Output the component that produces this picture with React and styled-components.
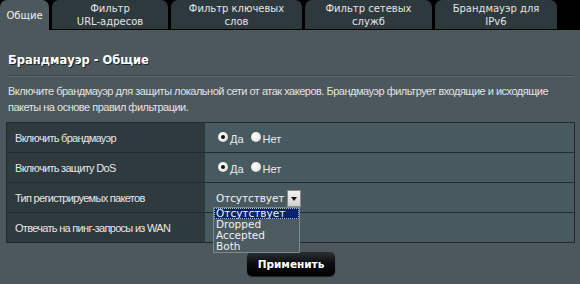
import React from "react";
import styled, { createGlobalStyle } from "styled-components";

const Global = createGlobalStyle`
  html, body { margin: 0; padding: 0; background: #000; }
  body { width: 580px; height: 284px; overflow: hidden; }
`;

const Page = styled.div`
  width: 580px;
  height: 284px;
  display: flex;
  flex-direction: column;
  background: #000;
  font-family: "DejaVu Sans", Verdana, sans-serif;
`;

const TabBar = styled.div`
  display: flex;
  align-items: flex-end;
  height: 30px;
  gap: 3px;
  background: #000;
`;

const Tab = styled.div`
  width: ${(p) => p.$w}px;
  height: ${(p) => (p.$active ? 30 : 29)}px;
  margin-bottom: ${(p) => (p.$active ? 0 : 1)}px;
  align-self: ${(p) => (p.$active ? "flex-end" : "flex-start")};
  border-radius: 7px 7px 0 0;
  background: ${(p) => (p.$active ? "#4d585c" : "#2e393d")};
  color: ${(p) => (p.$active ? "#f0f0f0" : "#e4e4e4")};
  font-size: 10px;
  line-height: 13px;
  text-align: center;
  display: flex;
  align-items: center;
  justify-content: center;
  flex-shrink: 0;
`;

const Panel = styled.div`
  flex: 1;
  background: #4d585c;
  padding: 22px 5px 0 6px;
  display: flex;
  flex-direction: column;
  position: relative;
`;

const Title = styled.div`
  color: #ffffff;
  font-weight: bold;
  font-size: 11.5px;
  line-height: 16px;
  padding-left: 2px;
  text-shadow: 1px 1px 0 #1e2628;
`;

const Rule = styled.div`
  margin: 7px 2px 0 2px;
  height: 1px;
  background: #3d474a;
  border-bottom: 1px solid #5d6a6e;
`;

const Desc = styled.div`
  margin-top: 6px;
  padding-left: 2px;
  color: #e2e2e2;
  font-family: "Liberation Sans", Arial, sans-serif;
  font-size: 11px;
  letter-spacing: -0.5px;
  line-height: 16px;
`;

const Table = styled.div`
  margin-top: 7px;
  border: 1px solid #20292c;
  display: flex;
  flex-direction: column;
`;

const Row = styled.div`
  display: grid;
  grid-template-columns: 198px 1fr;
  height: 29px;
  border-top: ${(p) => (p.$first ? "none" : "1px solid #232c2f")};
`;

const Label = styled.div`
  background: #2f3a3e;
  color: #e6e6e6;
  font-family: "Liberation Sans", Arial, sans-serif;
  font-size: 11px;
  letter-spacing: -0.7px;
  display: flex;
  align-items: center;
  padding-left: 8px;
`;

const Value = styled.div`
  background: #485a5f;
  display: flex;
  align-items: center;
  padding-left: 13px;
  position: relative;
`;

const RadioLabel = styled.span`
  display: inline-flex;
  align-items: center;
  color: #ececec;
  font-family: "Liberation Sans", Arial, sans-serif;
  font-size: 11px;
  margin-right: 7px;
`;

const RadioText = styled.span`
  margin-top: 3px;
`;

const Radio = styled.span`
  width: 10px;
  height: 10px;
  border-radius: 50%;
  background: radial-gradient(circle at 40% 40%, #ffffff 0%, #e8e8e8 60%, #b8b8b8 100%);
  box-sizing: border-box;
  margin-right: 2px;
  margin-top: -2px;
  display: inline-flex;
  align-items: center;
  justify-content: center;
  &::after {
    content: "";
    width: 4px;
    height: 4px;
    border-radius: 50%;
    background: ${(p) => (p.$checked ? "#111" : "transparent")};
  }
`;

const Select = styled.div`
  display: inline-flex;
  align-items: center;
  height: 17px;
  margin-left: -5px;
  margin-top: 2px;
`;

const SelectText = styled.span`
  color: #f2f2f2;
  font-size: 10.5px;
  letter-spacing: -0.1px;
  padding: 0 3px 0 3px;
  line-height: 17px;
`;

const SelectBtn = styled.span`
  width: 12px;
  height: 15px;
  background: linear-gradient(#f2f2f2, #cfcfcf);
  border: 1px solid #8a8a8a;
  display: inline-flex;
  align-items: center;
  justify-content: center;
  &::after {
    content: "";
    border-left: 3px solid transparent;
    border-right: 3px solid transparent;
    border-top: 4px solid #111;
  }
`;

const DropList = styled.div`
  position: absolute;
  left: 8px;
  top: 24px;
  width: 85px;
  background: #4b5b60;
  border: 1px solid #7a8a8e;
  z-index: 5;
  display: flex;
  flex-direction: column;
`;

const DropItem = styled.div`
  font-size: 10.5px;
  line-height: 11px;
  height: 11px;
  padding-left: 2px;
  color: #f0f0f0;
  background: ${(p) => (p.$sel ? "#0a246a" : "transparent")};
  outline: ${(p) => (p.$sel ? "1px dotted #b0b8d0" : "none")};
  outline-offset: -1px;
`;

const ButtonRow = styled.div`
  display: flex;
  justify-content: center;
  margin-top: 9px;
`;

const Button = styled.button`
  width: 88px;
  height: 24px;
  border: none;
  border-radius: 5px;
  background: linear-gradient(#2a2f31 0%, #0a0c0d 50%, #000 100%);
  color: #fff;
  font-family: "DejaVu Sans", Verdana, sans-serif;
  font-weight: bold;
  font-size: 10.5px;
  box-shadow: 0 1px 1px rgba(0, 0, 0, 0.6);
  padding: 0;
  margin-left: 1px;
`;

const tabs = [
  { w: 49, text: ["Общие"], active: true },
  { w: 116, text: ["Фильтр", "URL-адресов"] },
  { w: 131, text: ["Фильтр ключевых", "слов"] },
  { w: 127, text: ["Фильтр сетевых", "служб"] },
  { w: 122, text: ["Брандмауэр для", "IPv6"] },
];

function RadioPair() {
  return (
    <>
      <RadioLabel>
        <Radio $checked />
        <RadioText>Да</RadioText>
      </RadioLabel>
      <RadioLabel>
        <Radio />
        <RadioText>Нет</RadioText>
      </RadioLabel>
    </>
  );
}

export default function App() {
  return (
    <>
      <Global />
      <Page>
        <TabBar>
          {tabs.map((t, i) => (
            <Tab key={i} $w={t.w} $active={t.active}>
              <div>
                {t.text.map((l, j) => (
                  <div key={j}>{l}</div>
                ))}
              </div>
            </Tab>
          ))}
        </TabBar>
        <Panel>
          <Title>Брандмауэр - Общие</Title>
          <Rule />
          <Desc>
            Включите брандмауэр для защиты локальной сети от атак хакеров. Брандмауэр фильтрует входящие и исходящие
            пакеты на основе правил фильтрации.
          </Desc>
          <Table>
            <Row $first>
              <Label>Включить брандмауэр</Label>
              <Value>
                <RadioPair />
              </Value>
            </Row>
            <Row>
              <Label>Включить защиту DoS</Label>
              <Value>
                <RadioPair />
              </Value>
            </Row>
            <Row>
              <Label>Тип регистрируемых пакетов</Label>
              <Value>
                <Select>
                  <SelectText>Отсутствует</SelectText>
                  <SelectBtn />
                </Select>
                <DropList>
                  <DropItem $sel>Отсутствует</DropItem>
                  <DropItem>Dropped</DropItem>
                  <DropItem>Accepted</DropItem>
                  <DropItem>Both</DropItem>
                </DropList>
              </Value>
            </Row>
            <Row>
              <Label>Отвечать на пинг-запросы из WAN</Label>
              <Value />
            </Row>
          </Table>
          <ButtonRow>
            <Button>Применить</Button>
          </ButtonRow>
        </Panel>
      </Page>
    </>
  );
}
